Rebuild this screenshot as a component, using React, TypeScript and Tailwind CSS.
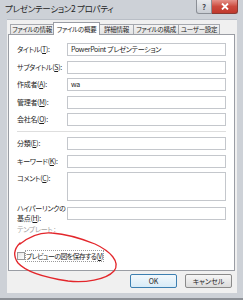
import React from 'react'

const fields = [
  { label: 'タイトル', key: 'T', value: 'PowerPoint プレゼンテーション' },
  { label: 'サブタイトル', key: 'S', value: '' },
  { label: '作成者', key: 'A', value: 'wa' },
  { label: '管理者', key: 'M', value: '' },
  { label: '会社名', key: 'O', value: '' },
]

const tabs = ['ファイルの情報', 'ファイルの概要', '詳細情報', 'ファイルの構成', 'ユーザー設定']
const tabWidths = ['w-[43px]', 'w-[47px]', 'w-[33px]', 'w-[45px]', 'w-[42px]']

function Label({ text, k }: { text: string; k: string }) {
  return (
    <span>
      {text}(<span className="underline">{k}</span>):
    </span>
  )
}

function Field({ label, k, value, tall }: { label: string; k: string; value?: string; tall?: boolean }) {
  return (
    <div className={`flex shrink-0 ${tall ? 'items-start' : 'items-center'}`}>
      <div className="w-[50px] shrink-0 whitespace-nowrap leading-[13px]">
        <Label text={label} k={k} />
      </div>
      <div
        className={`w-[159px] shrink-0 ${tall ? 'h-[29px]' : 'h-[13px]'} border border-[#c4c7cc] bg-white px-[3px] leading-[11px] whitespace-nowrap`}
      >
        {value}
      </div>
    </div>
  )
}

export default function App() {
  return (
    <div className="relative w-[243px] h-[300px] bg-[#cdd1d7] flex flex-col overflow-hidden border-b-[2px] border-[#8c9096] text-[#1e1e1e] font-['Noto_Sans_CJK_JP',sans-serif] [font-feature-settings:'palt']">
      {/* title bar */}
      <div className="h-[19px] shrink-0 flex items-start">
        <div className="pl-[5px] pt-[3px] text-[8.5px] leading-[11px] tracking-[-0.3px] whitespace-nowrap">プレゼンテーション2 プロパティ</div>
        <div className="ml-auto mr-[5px] flex">
          <div className="w-[16px] h-[14px] border border-t-0 border-[#8b8f96] rounded-bl-[3px] bg-gradient-to-b from-[#e9ebee] to-[#c9cdd3] flex items-center justify-center text-[8px] leading-none text-[#4a4e55] font-bold">
            ?
          </div>
          <div className="w-[26px] h-[14px] border border-t-0 border-l-0 border-[#8b3a33] rounded-br-[3px] bg-gradient-to-b from-[#e4928a] via-[#cc4a3e] to-[#c0392d] flex items-center justify-center">
            <svg width="8" height="7" viewBox="0 0 8 7">
              <path d="M1 0.5 L7 6.5 M7 0.5 L1 6.5" stroke="white" strokeWidth="1.8" />
            </svg>
          </div>
        </div>
      </div>

      {/* client area */}
      <div className="ml-[7px] mr-[6px] mb-[5px] flex-1 bg-[#f0f0f0] border-t border-[#b9bec6] flex flex-col">
        {/* tabs */}
        <div className="h-[13px] shrink-0 mt-[1px] flex items-end pl-[3px] text-[6.5px] tracking-[-0.3px] whitespace-nowrap">
          {tabs.map((t, i) =>
            i === 1 ? (
              <div
                key={t}
                className={`${tabWidths[i]} shrink-0 h-[13px] -mb-[1px] relative z-10 bg-white border border-b-0 border-[#9a9da4] flex items-center justify-center leading-none`}
              >
                {t}
              </div>
            ) : (
              <div
                key={t}
                className={`${tabWidths[i]} shrink-0 h-[10px] border-t ${i === 0 ? 'border-l' : ''} ${i === 4 ? 'border-r' : ''} ${i > 2 ? 'border-l' : ''} border-[#a5a8ae] bg-gradient-to-b from-[#f3f3f3] to-[#e3e3e3] flex items-center justify-center leading-none`}
              >
                {t}
              </div>
            )
          )}
        </div>

        {/* panel */}
        <div className="ml-[1px] mr-[2px] h-[237px] shrink-0 bg-white border border-[#9a9da4] pl-[8px] pt-[8px] text-[7px] tracking-[-0.3px] flex flex-col">
          <div className="flex flex-col gap-[4.5px]">
            {fields.map((f) => (
              <Field key={f.key} label={f.label} k={f.key} value={f.value} />
            ))}
          </div>
          <div className="w-[209px] h-px shrink-0 bg-[#dedede] mt-[5px]" />
          <div className="mt-[5px] flex flex-col gap-[4.5px]">
            <Field label="分類" k="E" />
            <Field label="キーワード" k="K" />
            <Field label="コメント" k="C" tall />
          </div>
          <div className="mt-[2px] flex items-center shrink-0">
            <div className="w-[50px] shrink-0 whitespace-nowrap leading-[10px]">
              ハイパーリンクの
              <br />
              基点(<span className="underline">H</span>):
            </div>
            <div className="w-[159px] h-[13px] border border-[#c4c7cc] bg-white" />
          </div>
          <div className="mt-[1px] leading-[11px] text-[#a3a3a3] whitespace-nowrap">テンプレート :</div>
          <div className="mt-[16px] flex items-center gap-[1px] whitespace-nowrap">
            <div className="w-[8px] h-[8px] shrink-0 border border-[#9a9a9a] bg-gradient-to-br from-[#e6e6e6] to-white" />
            <div className="outline outline-1 outline-dotted outline-[#9a9a9a] leading-[10px] tracking-[-0.7px]">
              プレビューの図を保存する(<span className="underline">V</span>)
            </div>
          </div>
        </div>

        {/* buttons */}
        <div className="mt-[3px] flex justify-end gap-[8px] pr-[5px] text-[7px] whitespace-nowrap">
          <div className="w-[47px] h-[14px] rounded-[2px] border border-[#3c7fb1] bg-gradient-to-b from-[#f2f8fc] to-[#d8ebf7] flex items-center justify-center leading-none">
            OK
          </div>
          <div className="w-[47px] h-[14px] rounded-[2px] border border-[#8a8a8a] bg-gradient-to-b from-[#f6f6f6] to-[#dcdcdc] flex items-center justify-center leading-none">
            キャンセル
          </div>
        </div>
      </div>

      {/* red hand-drawn annotation */}
      <svg className="absolute inset-0 pointer-events-none" width="243" height="300" viewBox="0 0 243 300">
        <path
          d="M20 244 C 30 236, 42 232, 52 233 C 66 234, 80 238, 95 244 C 110 251, 121 262, 114 271 C 106 280, 84 283, 68 281 C 48 278, 26 272, 18 263 C 13 256, 14 249, 20 243"
          fill="none"
          stroke="#e3262b"
          strokeWidth="1.3"
          strokeLinecap="round"
        />
      </svg>
    </div>
  )
}
